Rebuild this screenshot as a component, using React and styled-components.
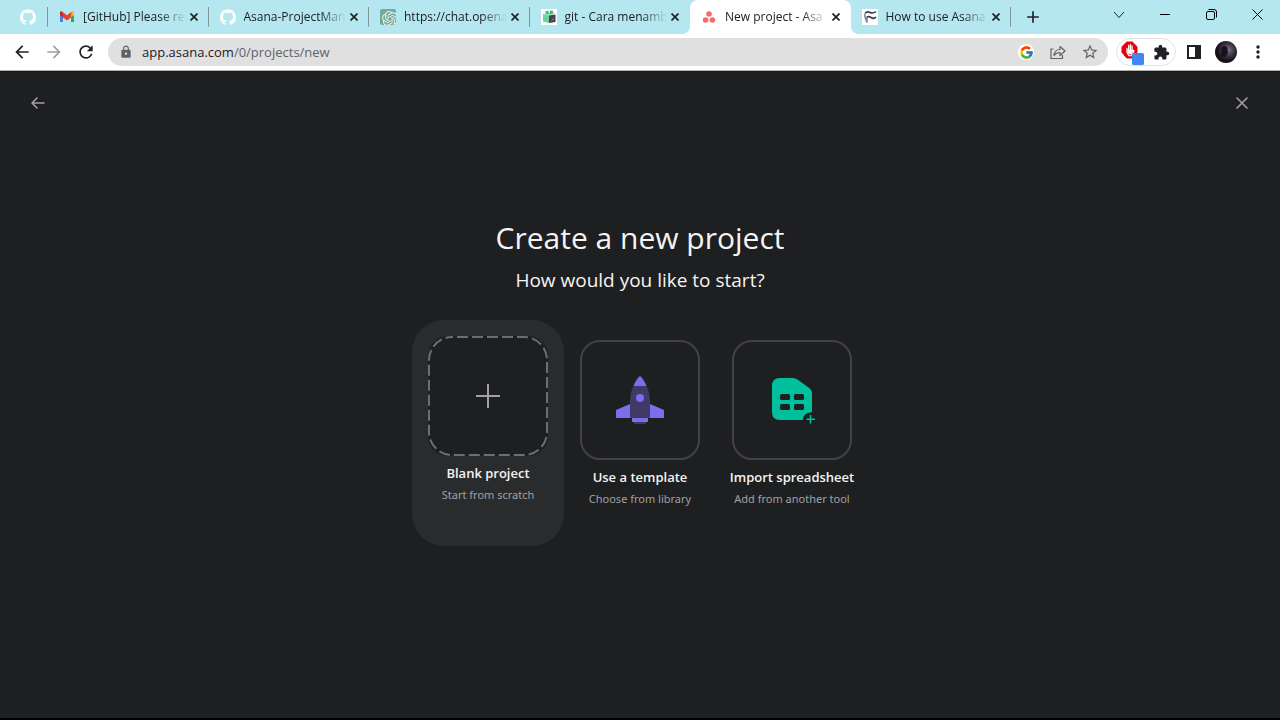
import React from "react";
import styled, { createGlobalStyle, css } from "styled-components";
import {
  MdAdd, MdArrowBack, MdArrowForward, MdExtension, MdLock,
  MdMoreVert, MdRefresh, MdStarBorder,
} from "react-icons/md";
import { FcGoogle } from "react-icons/fc";
import { SiGithub, SiOpenai } from "react-icons/si";

const GlobalStyle = createGlobalStyle`
  *, *::before, *::after { box-sizing: border-box; }
  body {
    margin: 0;
    font-family: "Open Sans", "Noto Sans", sans-serif;
    background: #1e1f21;
  }
  button { font: inherit; color: inherit; border: 0; padding: 0; background: none; cursor: pointer; }
  svg { display: block; flex: none; }
`;

const Window = styled.div`
  min-height: 100vh;
  display: flex;
  flex-direction: column;
`;

const TabStrip = styled.header`
  height: 34px;
  display: flex;
  align-items: stretch;
  background: #b5e7f1;
  color: #202124;
`;

const PinnedTab = styled.button`
  width: 48px;
  padding-left: 8px;
  display: flex;
  align-items: center;
  justify-content: center;
  color: #fff;
  background: linear-gradient(#7d979d, #7d979d) right center / 1px 20px no-repeat;
`;

const TabList = styled.nav`
  flex: 0 1 963px;
  min-width: 0;
  display: flex;
`;

const Tab = styled.div`
  flex: 1 1 0;
  min-width: 0;
  position: relative;
  display: flex;
  align-items: center;
  padding: 0 7px 0 11px;
  ${(p) => p.$divided && css`
    background: linear-gradient(#7d979d, #7d979d) right center / 1px 20px no-repeat;
  `}
  ${(p) => p.$active && css`
    background: #fff;
    border-radius: 8px 8px 0 0;
    &::before, &::after {
      content: "";
      position: absolute;
      bottom: 0;
      width: 8px;
      height: 8px;
    }
    &::before {
      right: 100%;
      background: radial-gradient(circle at 0 0, transparent 8px, #fff 8px);
    }
    &::after {
      left: 100%;
      background: radial-gradient(circle at 100% 0, transparent 8px, #fff 8px);
    }
  `}
`;

const TabTitle = styled.button`
  flex: 1;
  min-width: 0;
  height: 100%;
  display: flex;
  align-items: center;
  gap: 8px;
  text-align: left;
`;

const TabLabel = styled.span`
  flex: 1;
  overflow: hidden;
  white-space: nowrap;
  font-size: 12px;
  line-height: 16px;
  mask-image: linear-gradient(to right, #000 75%, transparent);
`;

const TabClose = styled.button`
  width: 16px;
  height: 16px;
  display: grid;
  place-items: center;
`;

const NewTab = styled.button`
  width: 44px;
  display: grid;
  place-items: center;
`;

const WindowControls = styled.div`
  margin-left: auto;
  height: 29px;
  display: flex;
`;

const WindowButton = styled.button`
  width: 46px;
  display: grid;
  place-items: center;
`;

const Toolbar = styled.div`
  height: 37px;
  display: flex;
  align-items: center;
  background: #fff;
  color: #202124;
  border-bottom: 1px solid #b0b0b0;
`;

const NavButtons = styled.div`
  display: flex;
  padding: 0 6px;
`;

const ToolButton = styled.button`
  width: 32px;
  height: 28px;
  display: grid;
  place-items: center;
  color: ${(p) => p.$tone || "#202124"};
`;

const AddressBar = styled.div`
  flex: 1;
  min-width: 0;
  height: 28px;
  display: flex;
  align-items: center;
  padding: 0 2px 0 11px;
  border-radius: 14px;
  background: #e0e0e0;
  color: #5f6368;
`;

const Url = styled.a`
  flex: 1;
  margin-left: 9px;
  font-size: 13px;
  line-height: 20px;
  color: #5f6368;
  text-decoration: none;
  strong { font-weight: 400; color: #202124; }
`;

const GoogleBadge = styled.span`
  width: 16px;
  height: 16px;
  display: grid;
  place-items: center;
  border-radius: 50%;
  background: #fff;
`;

const Extensions = styled.div`
  height: 28px;
  width: 60px;
  margin-left: 8px;
  padding-left: 2px;
  display: flex;
  align-items: center;
  border: 1px solid #e0e2e5;
  border-radius: 14px;
`;

const ExtensionButton = styled.button`
  flex: 1;
  display: grid;
  place-items: center;
`;

const ProfileTools = styled.div`
  display: flex;
  padding: 0 6px 0 2px;
`;

const Page = styled.main`
  flex: 1;
  display: flex;
  flex-direction: column;
  color: #f5f4f3;
  background: #1e1f21;
  border-top: 1px solid #17181a;
  border-bottom: 2px solid #000;
`;

const PageNav = styled.div`
  display: flex;
  justify-content: space-between;
  padding: 15px 22px;
  color: #a2a0a2;
`;

const PageNavButton = styled.button`
  width: 32px;
  height: 32px;
  display: grid;
  place-items: center;
`;

const Content = styled.section`
  display: flex;
  flex-direction: column;
  align-items: center;
  padding: 84px 16px 0;
`;

const Heading = styled.h1`
  margin: 0;
  font-size: 30px;
  line-height: 40px;
  font-weight: 400;
`;

const Question = styled.h2`
  margin: 8px 0 0;
  font-size: 19px;
  line-height: 28px;
  font-weight: 400;
`;

const Options = styled.div`
  display: flex;
  margin-top: 26px;
`;

const Option = styled.button`
  width: 152px;
  height: 226px;
  padding: ${(p) => (p.$raised ? "16px" : "20px 16px 12px")};
  display: flex;
  flex-direction: column;
  align-items: center;
  border-radius: 32px;
  background: ${(p) => (p.$raised ? "#2a2b2d" : "transparent")};
`;

const Tile = styled.span`
  width: 120px;
  height: 120px;
  display: grid;
  place-items: center;
  border-radius: 20px;
  background: #1e1f21;
  border: ${(p) => (p.$outlined ? "2px solid #424244" : "0")};
`;

const OptionTitle = styled.span`
  margin-top: 8px;
  font-size: 13px;
  line-height: 18px;
  font-weight: 600;
  white-space: nowrap;
`;

const OptionNote = styled.span`
  font-family: "Noto Sans", sans-serif;
  font-size: 11px;
  line-height: 26px;
  color: #a2a0a2;
  white-space: nowrap;
`;

const GmailIcon = () => (
  <svg width="16" height="16" viewBox="0 0 16 16">
    <path d="M1 3.5V13h3V7.5L1 5z" fill="#4285f4" />
    <path d="M12 7.5V13h3V3.5L12 6z" fill="#34a853" />
    <path d="M12 4.5v3.8l3-2.3V4c0-1.6-1.6-2-2.4-1.3z" fill="#fbbc04" />
    <path d="M1 4v2l3 2.3V4.5L3.2 2.6C2.3 2 1 2.6 1 4z" fill="#c5221f" />
    <path d="M4 8.3V4L8 7l4-3v4.3l-4 3z" fill="#ea4335" />
    <path d="M3.2 2.6L8 6.3l4.6-3.6L12 8.3l-4 3-4-3z" fill="#ea4335" />
  </svg>
);

const ChatIcon = () => (
  <svg width="16" height="16" viewBox="0 0 16 16">
    <rect width="16" height="16" rx="2" fill="#74aa9c" />
    <SiOpenai x="2" y="2" width="12" height="12" color="#e9f3f0" />
  </svg>
);

const BoxIcon = () => (
  <svg width="16" height="16" viewBox="0 0 16 16">
    <rect width="16" height="16" fill="#fff" />
    <path d="M2 5l6-1.500 6.500 1L9 6.500z" fill="#8adbb0" />
    <path d="M2 5l6 1.500V14l-6-1.500z" fill="#6fd39b" />
    <path d="M4.500 2.500l3-1V5l-3-.8zM9 1.500l3 .5v2L9 5z" fill="#48a877" />
    <path d="M8 6.500L14.500 5.500v7.500L8 14z" fill="#3f4649" />
    <path d="M10.500 11.500l2.500-1.800" stroke="#8c9193" />
  </svg>
);

const AsanaIcon = () => (
  <svg width="16" height="16" viewBox="0 0 16 16" fill="#f8696b">
    <circle cx="8" cy="5" r="2.800" />
    <circle cx="4.600" cy="11" r="2.800" />
    <circle cx="11.400" cy="11" r="2.800" />
  </svg>
);

const GuideIcon = () => (
  <svg width="16" height="16" viewBox="0 0 16 16" fill="none">
    <rect width="16" height="16" fill="#fff" />
    <path d="M3 4.500Q5 2 8 3.500t6-1" stroke="#3b3b40" strokeWidth="1.600" />
    <path d="M4 9.500q2-3 5-1t5-.5" stroke="#3b3b40" strokeWidth="1.600" />
    <path d="M2.500 5l1 4.500L5 13.500V8" stroke="#7e8a9c" strokeWidth="1.600" />
  </svg>
);

const TabCloseIcon = () => (
  <svg width="8" height="8" viewBox="0 0 8 8" stroke="#202124" strokeWidth="1.700">
    <path d="M.5.5l7 7M7.500.5l-7 7" />
  </svg>
);

const ShareIcon = () => (
  <svg width="16" height="16" viewBox="0 0 16 16" fill="none" stroke="#5f6368" strokeWidth="1.200">
    <path d="M3.500 5H1v9.500h11.500V11" />
    <path d="M4 11.500C4.500 7 7 5.500 10 5.500V2.500L15 7l-5 4.500V8.500C7.500 8.500 5.500 9.500 4 11.500z" strokeLinejoin="round" />
  </svg>
);

const BlockerIcon = () => (
  <svg width="24" height="26" viewBox="0 0 24 26">
    <path d="M5.700 3h5.600L16 7.700v5.600L11.300 19H5.700L1 13.300V7.700z" fill="#e4000f" stroke="#e4000f" strokeLinejoin="round" />
    <path d="M6 9.500v4L8 16.500h2.500l2.500-4.500-.8-.7L11 12.500V7M7.700 12V6.500M9.400 12V5.500" stroke="#fff" strokeWidth="1.300" fill="none" strokeLinecap="round" />
    <path d="M6 11h5v4H7.500z" fill="#fff" />
    <rect x="11" y="14" width="12" height="12" rx="1.500" fill="#4285f4" />
  </svg>
);

const SidePanelIcon = () => (
  <svg width="14" height="14" viewBox="0 0 14 14">
    <path d="M0 0h14v14H0zM2 2v10h6V2z" fill="#202124" fillRule="evenodd" />
  </svg>
);

const Avatar = () => (
  <svg width="22" height="22" viewBox="0 0 22 22">
    <defs>
      <radialGradient id="avatar" cx="60%" cy="40%">
        <stop offset="0" stopColor="#80748a" />
        <stop offset="0.500" stopColor="#453b49" />
        <stop offset="1" stopColor="#151116" />
      </radialGradient>
    </defs>
    <circle cx="11" cy="11" r="11" fill="url(#avatar)" />
    <path d="M6 8q1-3 4-3 3 1 2.500 4l.5 3-3 4q-4 0-4-3l1-2z" fill="#17121a" />
  </svg>
);

const ChevronIcon = () => (
  <svg width="12" height="8" viewBox="0 0 12 8" fill="none" stroke="#202124"><path d="M1 1l5 5.500L11 1" /></svg>
);
const MinimizeIcon = () => (
  <svg width="10" height="10" viewBox="0 0 10 10" stroke="#000"><path d="M0 4.500h10" /></svg>
);
const RestoreIcon = () => (
  <svg width="11" height="11" viewBox="0 0 11 11" fill="none" stroke="#000">
    <rect x="0.500" y="2.500" width="8" height="8" rx="1.500" />
    <path d="M2.500.5H8Q10.500.5 10.500 3v5.500" />
  </svg>
);
const CloseWindowIcon = () => (
  <svg width="11" height="11" viewBox="0 0 11 11" stroke="#000"><path d="M.5.5l10 10M10.500.5l-10 10" /></svg>
);

const BackArrow = () => (
  <svg width="16" height="16" viewBox="0 0 16 16" fill="none" stroke="currentColor" strokeWidth="1.600" strokeLinecap="round" strokeLinejoin="round">
    <path d="M14 8H2M7 3L2 8l5 5" />
  </svg>
);
const CloseCross = () => (
  <svg width="16" height="16" viewBox="0 0 16 16" fill="none" stroke="currentColor" strokeWidth="1.600" strokeLinecap="round">
    <path d="M3 3l10 10M13 3L3 13" />
  </svg>
);

const BlankArt = () => (
  <svg width="120" height="120" viewBox="0 0 120 120" fill="none">
    <rect x="1" y="1" width="118" height="118" rx="23" stroke="#6d6e6f" strokeWidth="2" strokeDasharray="11 4" strokeDashoffset="-5" />
    <path d="M60 48v24M48 60h24" stroke="#a2a0a2" strokeWidth="2" />
  </svg>
);

const RocketArt = () => (
  <svg width="48" height="48" viewBox="0 0 48 48">
    <path d="M17.500 10C19 6 21.500 2 24 0c2.500 2 5 6 6.500 10z" fill="#796eee" />
    <path d="M17.500 10h13C33 15 34 20 34 26v16H14V26c0-6 1-11 3.500-16z" fill="#3f3b66" />
    <path d="M14 28v14H0v-8zM34 28v14h14v-8zM16 42h16v4H16z" fill="#796eee" />
    <path d="M18 46h12v2H18z" fill="#3f3b66" />
    <circle cx="24" cy="22" r="4" fill="#796eee" />
  </svg>
);

const SheetArt = () => (
  <svg width="48" height="48" viewBox="0 0 48 48">
    <path d="M12 2h13q2.500 0 4.500 1.500l11 8Q44 14 44 17v19q-9 1-9 8H12q-8 0-8-8V10q0-8 8-8z" fill="#00bf9c" />
    <g fill="#1e1f21">
      <rect x="12" y="18" width="10" height="6" rx="1.500" />
      <rect x="26" y="18" width="10" height="6" rx="1.500" />
      <rect x="12" y="28" width="10" height="6" rx="1.500" />
      <rect x="26" y="28" width="10" height="6" rx="1.500" />
    </g>
    <path d="M42.500 39v8.500M38.500 43.200h8.500" stroke="#00bf9c" strokeWidth="1.600" />
  </svg>
);

const TABS = [
  { icon: <GmailIcon />, label: "[GitHub] Please res", divided: true },
  { icon: <SiGithub size={16} color="#fff" />, label: "Asana-ProjectMan", divided: true },
  { icon: <ChatIcon />, label: "https://chat.opena", divided: true },
  { icon: <BoxIcon />, label: "git - Cara menamb" },
  { icon: <AsanaIcon />, label: "New project - Asa", active: true },
  { icon: <GuideIcon />, label: "How to use Asana", divided: true },
];

const OPTIONS = [
  { title: "Blank project", note: "Start from scratch", art: <BlankArt />, raised: true },
  { title: "Use a template", note: "Choose from library", art: <RocketArt /> },
  { title: "Import spreadsheet", note: "Add from another tool", art: <SheetArt /> },
];

export default function App() {
  return (
    <Window>
      <GlobalStyle />
      <TabStrip>
        <PinnedTab aria-label="GitHub"><SiGithub size={16} /></PinnedTab>
        <TabList aria-label="Tabs">
          {TABS.map((tab) => (
            <Tab key={tab.label} $active={tab.active} $divided={tab.divided}>
              <TabTitle>{tab.icon}<TabLabel>{tab.label}</TabLabel></TabTitle>
              <TabClose aria-label="Close tab"><TabCloseIcon /></TabClose>
            </Tab>
          ))}
        </TabList>
        <NewTab aria-label="New tab"><MdAdd size={20} /></NewTab>
        <WindowControls>
          <WindowButton aria-label="Search tabs"><ChevronIcon /></WindowButton>
          <WindowButton aria-label="Minimize"><MinimizeIcon /></WindowButton>
          <WindowButton aria-label="Restore"><RestoreIcon /></WindowButton>
          <WindowButton aria-label="Close window"><CloseWindowIcon /></WindowButton>
        </WindowControls>
      </TabStrip>
      <Toolbar>
        <NavButtons>
          <ToolButton aria-label="Back"><MdArrowBack size={20} /></ToolButton>
          <ToolButton aria-label="Forward" $tone="#a0a0a2"><MdArrowForward size={20} /></ToolButton>
          <ToolButton aria-label="Reload"><MdRefresh size={20} /></ToolButton>
        </NavButtons>
        <AddressBar>
          <MdLock size={14} />
          <Url href="#"><strong>app.asana.com</strong>/0/projects/new</Url>
          <ToolButton aria-label="Search with Google"><GoogleBadge><FcGoogle size={15} /></GoogleBadge></ToolButton>
          <ToolButton aria-label="Share"><ShareIcon /></ToolButton>
          <ToolButton aria-label="Bookmark" $tone="#5f6368"><MdStarBorder size={18} /></ToolButton>
        </AddressBar>
        <Extensions>
          <ExtensionButton aria-label="Ad blocker"><BlockerIcon /></ExtensionButton>
          <ExtensionButton aria-label="Extensions"><MdExtension size={17} /></ExtensionButton>
        </Extensions>
        <ProfileTools>
          <ToolButton aria-label="Side panel"><SidePanelIcon /></ToolButton>
          <ToolButton aria-label="Profile"><Avatar /></ToolButton>
          <ToolButton aria-label="Menu"><MdMoreVert size={20} /></ToolButton>
        </ProfileTools>
      </Toolbar>
      <Page>
        <PageNav>
          <PageNavButton aria-label="Go back"><BackArrow /></PageNavButton>
          <PageNavButton aria-label="Close"><CloseCross /></PageNavButton>
        </PageNav>
        <Content>
          <Heading>Create a new project</Heading>
          <Question>How would you like to start?</Question>
          <Options>
            {OPTIONS.map((o) => (
              <Option key={o.title} $raised={o.raised}>
                <Tile $outlined={!o.raised}>{o.art}</Tile>
                <OptionTitle>{o.title}</OptionTitle>
                <OptionNote>{o.note}</OptionNote>
              </Option>
            ))}
          </Options>
        </Content>
      </Page>
    </Window>
  );
}
